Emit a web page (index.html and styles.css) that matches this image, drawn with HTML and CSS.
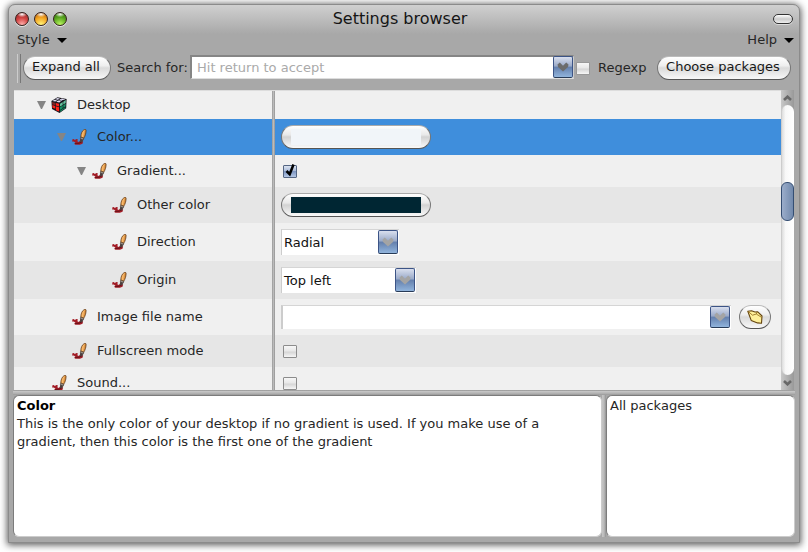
FILE: index.html
```html
<!DOCTYPE html>
<html lang="en">
<head>
<meta charset="utf-8">
<title>Settings browser</title>
<link rel="stylesheet" href="styles.css">
</head>
<body>
<svg class="defs" width="0" height="0">
  <defs>
    <linearGradient id="wood" x1="0" y1="0" x2="1" y2="0.3"><stop offset="0" stop-color="#d98a35"/><stop offset=".5" stop-color="#fbbd70"/><stop offset="1" stop-color="#c0701f"/></linearGradient>
    <symbol id="brush" viewBox="0 0 16 16">
      <path d="M.2 10.600l1.600-.6 1 .9 1.600-.9 1.400.3-.4 1.900 1.200.8 2-1.600 2.500 1.200-.6 2.200-2.600 1H3.400l-1.400-1 1.500-1-1.700-1.200-1.400.2z" fill="#a31d27"/>
      <path d="M3 14.400l4-.1 3-1.600" stroke="#671219" fill="none"/>
      <path d="M8.300 9.600l3 1-1.200 2.900-2.400-.9z" fill="#4c403e"/>
      <path d="M8.700 8l3.200 1.100-.6 1.900-3-1.200z" fill="#a09890" stroke="#443a35" stroke-width=".6"/>
      <path d="M8.800 7.900c0-2.900 1.200-6.200 3.400-7.300 1.400-.6 2-.1 1.900 1.200-.1 2.500-.9 5.300-2.300 7.300z" fill="url(#wood)" stroke="#593414" stroke-width=".7"/>
    </symbol>
    <symbol id="tri" viewBox="0 0 9 8"><path d="M0 0h9L5 8H4z"/></symbol>
    <symbol id="chev" viewBox="0 0 12 10"><path d="M.5 2.500L2.800.5 6 3.800 9.200.5l2.300 2L11 5 6 9.500 1 5z"/></symbol>
    <symbol id="arrow" viewBox="0 0 9 6"><path d="M1 1l3.500 3.300L8 1" fill="none" stroke="#686868" stroke-width="2.600"/></symbol>
  </defs>
</svg>
<main class="window">
  <header class="titlebar">
    <div class="lights"><i class="light red"></i><i class="light amber"></i><i class="light green"></i></div>
    <h1>Settings browser</h1>
    <i class="pill"></i>
  </header>
  <nav class="menubar">
    <span class="menu">Style<i class="caret"></i></span>
    <span class="menu">Help<i class="caret"></i></span>
  </nav>
  <section class="toolbar">
    <i class="grip"></i>
    <button class="btn expand">Expand all</button>
    <label class="search-label">Search for:</label>
    <div class="search"><span>Hit return to accept</span><i class="drop"><svg><use href="#chev"/></svg></i></div>
    <i class="check plain"></i>
    <label class="regexp">Regexp</label>
    <button class="btn choose">Choose packages</button>
  </section>
  <section class="browser">
    <div class="tree">
      <div class="row r-desktop">
        <div class="name l1"><svg class="tri"><use href="#tri"/></svg>
          <svg class="icon cube" viewBox="0 0 16 16"><path d="M.4 4L6.500.2l9.100 1.900-.4 9.200-6.700 4.600L1 12z" fill="#17151c"/><path d="M1.500 3.900l1.900-1.200 2.700.7-1.800 1.200zM4.200 2.200l2.100-1.300 2.600.5-2 1.400zM5.200 4.800l1.900-1.200 2.900.7-1.700 1.300zM7.800 3.200l1.900-1.300 2.700.6-1.800 1.300zM10 1.700l.8-.1 3.500.8-1.400.6z" fill="#dfdcf3"/><path d="M1 4.900l3.100.8.100 2.600-3-.9z" fill="#7d2527"/><path d="M4.700 5.900l3.400.9v2.800l-3.300-1zM1.300 8l2.900.9.100 2.800-2.800-.9zM4.900 9.300l3.200 1v4.300L5 13.200z" fill="#ff2119"/><path d="M9 6.800l2.700-1.700v2.800L9 9.500zM12.300 4.700l2.500-1.600-.1 2.800-2.400 1.500z" fill="#63c29d"/><path d="M9 10.300l2.700-1.700v2.600L9 12.900zM12.300 8.200l2.300-1.500-.1 2.700-2.200 1.400zM9 13.700l5.300-3.400-.1 1L9 14.900z" fill="#129365"/></svg>Desktop</div><i class="split"></i><div class="value"></div>
      </div>
      <div class="row r-color selected"><div class="name l2"><svg class="tri"><use href="#tri"/></svg><svg class="icon"><use href="#brush"/></svg>Color...</div><i class="split"></i><div class="value"><span class="swatch"><i class="light-fill"></i></span></div></div>
      <div class="row r-gradient"><div class="name l3"><svg class="tri"><use href="#tri"/></svg><svg class="icon"><use href="#brush"/></svg>Gradient...</div><i class="split"></i><div class="value"><i class="check on"><svg viewBox="0 0 14 14"><path d="M3.500 7l3.200 3.200L10.500.5" fill="none" stroke="#000" stroke-width="2.500"/></svg></i></div></div>
      <div class="row r-other alt"><div class="name l4"><svg class="icon"><use href="#brush"/></svg>Other color</div><i class="split"></i><div class="value"><span class="swatch"><i class="dark-fill"></i></span></div></div>
      <div class="row r-direction"><div class="name l4"><svg class="icon"><use href="#brush"/></svg>Direction</div><i class="split"></i><div class="value"><span class="select radial"><span>Radial</span><i class="drop"><svg><use href="#chev"/></svg></i></span></div></div>
      <div class="row r-origin alt"><div class="name l4"><svg class="icon"><use href="#brush"/></svg>Origin</div><i class="split"></i><div class="value"><span class="select topleft"><span>Top left</span><i class="drop"><svg><use href="#chev"/></svg></i></span></div></div>
      <div class="row r-image"><div class="name l2 leaf"><svg class="icon"><use href="#brush"/></svg>Image file name</div><i class="split"></i><div class="value"><span class="select file"><span></span><i class="drop"><svg><use href="#chev"/></svg></i></span>
        <button class="folder"><svg viewBox="0 0 16 14"><path d="M.8 1.200L4.500.7 8 2l2.500-.3L15 6l-.5 7.300-4-.4-6.300-2.500z" fill="#fff09a" stroke="#65450f" stroke-width="1.100" stroke-linejoin="round"/><path d="M1 1.300l4.500 3.900L9.300 4l5.500 3.500M9.300 4l.9-2" fill="none" stroke="#9a7424" stroke-width=".9"/></svg></button></div></div>
      <div class="row r-full alt"><div class="name l2 leaf"><svg class="icon"><use href="#brush"/></svg>Fullscreen mode</div><i class="split"></i><div class="value"><i class="check"></i></div></div>
      <div class="row r-sound"><div class="name l1 leaf"><svg class="icon"><use href="#brush"/></svg>Sound...</div><i class="split"></i><div class="value"><i class="check"></i></div></div>
    </div>
    <div class="scroll">
      <span class="end up"><svg><use href="#arrow"/></svg></span>
      <div class="track"><i class="thumb"></i></div>
      <span class="end"><svg><use href="#arrow"/></svg></span>
    </div>
  </section>
  <i class="hsplit"></i>
  <section class="bottom">
    <article class="panel desc"><b>Color</b><p>This is the only color of your desktop if no gradient is used. If you make use of a<br>gradient, then this color is the first one of the gradient</p></article>
    <i class="vsplit"></i>
    <article class="panel pkgs">All packages</article>
  </section>
</main>
</body>
</html>
```

FILE: styles.css
```css
* { box-sizing: border-box; }
body { margin: 0; width: 808px; height: 552px; overflow: hidden; background: #fff; padding: 4px 8px 9px; font: 13px/18px "DejaVu Sans", sans-serif; color: #262626; }
i { display: block; flex: none; font-style: normal; }
svg { flex: none; }
.defs { position: absolute; }
.window { width: 792px; height: 539px; display: flex; flex-direction: column; background: #a8a8a8 linear-gradient(#d0d0d0, #a8a8a8) 0 0 / 100% 29px no-repeat; border: 1px solid #8b8b8b; border-radius: 7px 7px 0 0; padding: 0 4px 5px; box-shadow: 0 1px 7px 1px rgba(0,0,0,.65); }
.titlebar { height: 26px; flex: none; display: grid; grid-template-columns: 1fr auto 1fr; align-items: center; padding: 0 2px; }
.titlebar h1 { margin: 0; font-size: 16px; font-weight: 400; line-height: 26px; color: #151515; padding: 1px 8px 0 0; }
.lights { display: flex; gap: 5px; }
.light { width: 14px; height: 14px; border-radius: 50%; border: 1px solid #33201c; box-shadow: 0 1px 0 #e5e5e5; }
.red { background: radial-gradient(ellipse 5px 3px at 50% 10%, #fff, transparent), radial-gradient(circle at 50% 95%, #ffb0ad, #d34442 50%, #8c2525); }
.amber { background: radial-gradient(ellipse 5px 3px at 50% 10%, #fff, transparent), radial-gradient(circle at 50% 95%, #fff57b, #f2a21e 55%, #a65414); }
.green { background: radial-gradient(ellipse 5px 3px at 50% 10%, #fff, transparent), radial-gradient(circle at 50% 95%, #bcf763, #58a51d 55%, #2f6811); }
.pill { justify-self: end; width: 20px; height: 10px; border: 1px solid #333; border-radius: 5px; background: linear-gradient(#fff, #ccc 50%, #eee); box-shadow: 0 1px 0 #ddd; }
.menubar { height: 18px; flex: none; display: flex; align-items: flex-start; justify-content: space-between; padding: 0 0 0 4px; line-height: 18px; }
.menu { display: flex; align-items: center; gap: 8px; }
.menu + .menu { padding-right: 1px; margin-right: 0; gap: 7px; }
.menu:first-child { gap: 7px; }
.caret { border: 5px solid transparent; border-top-color: #000; border-bottom: 0; }
.toolbar { height: 41px; flex: none; display: flex; padding: 5px 2px 0 4px; line-height: 27px; }
.grip { width: 4px; height: 29px; border-left: 1px solid #ccc; border-right: 1px solid #777; margin-right: 2px; }
.btn, .folder { border: 1px solid #777; border-top-color: #bbb; border-bottom-color: #555; background: linear-gradient(#fff, #eee 40%, #dadada 50%, #f8f8f8); border-radius: 12px; padding: 0; font: inherit; color: #181818; white-space: nowrap; flex: none; }
.btn { height: 24px; margin-top: 2px; line-height: 19px; padding-bottom: 3px; }
.expand { width: 88px; margin-right: 6px; padding-right: 2px; }
.search-label { width: 73px; white-space: nowrap; }
.search { display: flex; width: 384px; height: 24px; margin-top: 1px; background: #fff; border: 2px solid #858585; border-right: 1px solid #ccc; border-bottom: 1px solid #ddd; padding-left: 5px; color: #aaa; line-height: 21px; justify-content: space-between; }
.drop { width: 20px; height: 24px; border: 1px solid #3c5486; border-bottom-color: #283b57; border-radius: 2px; background: linear-gradient(#d9dfee, #99a9c8 46%, #647fac 50%, #91b4dc); display: grid; place-items: center; }
.drop svg { width: 12px; height: 10px; fill: #a4a4a4; }
.search .drop { height: 22px; margin-top: -1px; }
.search .drop svg { fill: #6c6c6c; }
.check { width: 14px; height: 13px; border: 1px solid #999; border-radius: 1px; background: linear-gradient(#f7f7f7, #e8e8e8 45%, #d6d6d6 55%, #f6f6f6); }
.plain { margin: 8px 0 0 2px; }
.regexp { margin-left: 8px; width: 59px; }
.choose { width: 134px; padding-right: 2px; }
.browser { display: flex; height: 300px; flex: none; margin-left: 1px; width: 780px; }
.tree { width: 767px; overflow: hidden; border-top: 1px solid #ddd; }
.row { display: grid; grid-template-columns: 258px 3px 1fr; background: #f0f0f0; }
.alt { background: #e6e6e6; }
.selected { background: #3f8edc; }
.r-desktop { height: 28px; }
.r-color, .r-other, .r-image { height: 36px; }
.r-gradient, .r-full, .r-sound { height: 32px; }
.r-direction, .r-origin { height: 38px; }
.split { background: linear-gradient(90deg, #989898, #bbb 50%, #929292); }
.name { display: flex; align-items: center; white-space: nowrap; padding-bottom: 1px; }
.l1 { padding-left: 23px; }
.l2 { padding-left: 43px; }
.l3 { padding-left: 63px; }
.l4 { padding-left: 97px; }
.l2.leaf { padding-left: 57px; }
.l1.leaf { padding-left: 37px; }
.tri { width: 9px; height: 8px; fill: #858585; margin-right: 5px; }
.icon { width: 16px; height: 16px; margin: 1px 9px 0 1px; }
.cube { margin: 1px 10px 0 0; }
.value { display: flex; align-items: center; padding-left: 6px; }
.swatch { width: 150px; height: 24px; border: 1px solid #777; border-top-color: #aaa; border-bottom-color: #555; border-radius: 12px; background: linear-gradient(#fff, #e9e9e9 40%, #d2d2d2 50%, #fafafa); padding: 3px 9px; }
.swatch i { height: 16px; width: 130px; }
.light-fill { background: #f1f5f9; }
.dark-fill { background: #002633; }
.value .check { margin: 0 0 0 2px; border-color: #8c8c8c; }
.value .on { border-color: #546582; background: linear-gradient(#dbe3f0, #aabbd9 45%, #7f97c2 50%, #b5c8e6); }
.on svg { display: block; width: 14px; height: 14px; margin: -2px 0 0 -1px; }
.select { display: flex; justify-content: space-between; height: 26px; background: #fff; border-left: 1px solid #ccc; border-top: 1px solid #d5d5d5; padding: 0 1px 0 2px; line-height: 26px; color: #111; }
.radial { width: 118px; }
.topleft { width: 135px; }
.file { width: 450px; height: 24px; border-width: 1px 0 0 2px; }
.file .drop { height: 22px; }
.folder { width: 32px; height: 24px; margin-left: 8px; display: grid; place-items: center; }
.folder svg { width: 16px; height: 14px; }
.scroll { width: 13px; display: flex; flex-direction: column; background: linear-gradient(90deg, #c8c8c8, #999); }
.end { height: 15px; display: grid; place-items: center; }
.end svg { width: 9px; height: 6px; }
.up svg { transform: rotate(180deg); }
.track { flex: 1; background: linear-gradient(90deg, #ddd, #f8f8f8 30%, #fff); border-radius: 7px; padding-top: 77px; border-left: 1px solid #ccc; }
.thumb { width: 13px; height: 39px; margin-left: -1px; border: 1px solid #354e72; border-radius: 6px; background: linear-gradient(90deg, #9badca, #7189ac); }
.hsplit { height: 5px; background: linear-gradient(#909090, #c4c4c4 30%, #b0b0b0 70%, #999); width: 782px; }
.bottom { display: flex; height: 142px; width: 782px; }
.panel { background: #fff; border: 1px solid #7c7c7c; border-right-color: #ccc; border-bottom-color: #ccc; border-radius: 6px; padding: 1px 3px; }
.desc { width: 589px; white-space: nowrap; }
.desc b { display: block; color: #000; }
.desc p { margin: 0; }
.vsplit { width: 4px; background: linear-gradient(90deg, #c5c5c5, #bbb 50%, #929292); }
.pkgs { width: 189px; }
```
